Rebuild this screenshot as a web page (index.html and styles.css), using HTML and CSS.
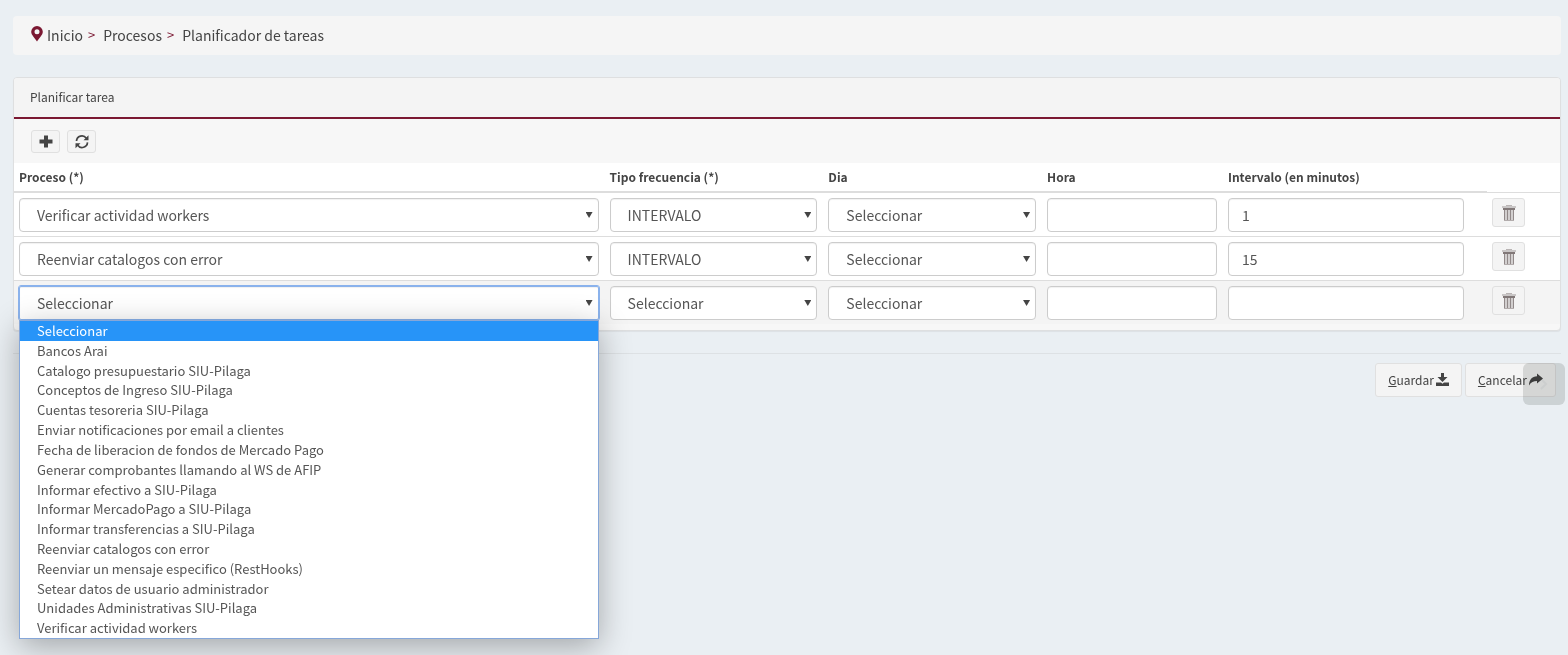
FILE: index.html
```html
<!DOCTYPE html>
<html lang="es">
<head>
<meta charset="utf-8">
<title>Planificador de tareas</title>
<link rel="stylesheet" href="styles.css">
</head>
<body>
<svg class="sprite" aria-hidden="true">
  <symbol id="trash" viewBox="0 0 14 18">
    <path fill="#b9b4b4" d="M4 1h6v2H4z"/>
    <path fill="#c9c6c6" d="M0 2h14v2H0z"/>
    <path fill="#817878" d="M1 4h12v2H1z"/>
    <path fill="#d2cfcf" d="M2 6h10v11H2z"/>
    <path fill="#918989" d="M2 6h1v11H2zM5 6h1v10H5zM8 6h1v10H8zM11 6h1v11h-1z"/>
    <path fill="#b3adad" d="M2 16h10v1H2z"/>
  </symbol>
</svg>
<nav class="breadcrumb" aria-label="Ruta">
  <svg class="pin" viewBox="0 0 12 16" aria-hidden="true"><path fill="#7b1832" fill-rule="evenodd" d="M6 0a5.800 5.800 0 0 0-5.800 5.800C.2 9 3.800 12 6 15.500 8.200 12 11.800 9 11.800 5.800A5.800 5.800 0 0 0 6 0zM6 3.200a2.500 2.500 0 1 1 0 5 2.500 2.500 0 0 1 0-5z"/></svg>
  <a href="#">Inicio</a><span class="sep">&gt;</span><a href="#">Procesos</a><span class="sep">&gt;</span><a href="#">Planificador de tareas</a>
</nav>

<form class="form">
  <section class="panel">
    <h1 class="panel-title">Planificar tarea</h1>
    <div class="toolbar">
      <button type="button" class="btn tool" aria-label="Agregar"><svg width="14" height="14" viewBox="0 0 14 14"><path fill="#444" d="M5 .500h4v4h4.500v4H9v4H5v-4H.500v-4H5z"/></svg></button>
      <button type="button" class="btn tool" aria-label="Actualizar"><svg width="14" height="14" viewBox="0 0 14 14"><path fill="none" stroke="#444" stroke-width="1.700" d="M1.500 6A5.400 5.400 0 0 1 11.300 3.200M12.500 7.400A5.400 5.400 0 0 1 2.700 10.200"/><path fill="#444" d="M13.500.200v5H8.500zM.500 13.200v-5h5z"/></svg></button>
    </div>
    <table class="grid">
      <colgroup><col class="c-process"><col class="c-type"><col class="c-day"><col class="c-hour"><col class="c-interval"><col></colgroup>
      <thead>
        <tr><th id="h1">Proceso (*)</th><th id="h2">Tipo frecuencia (*)</th><th id="h3">Dia</th><th id="h4">Hora</th><th id="h5">Intervalo (en minutos)</th><td class="blank"></td></tr>
      </thead>
      <tbody>
        <tr>
          <td><div class="pick"><select class="field" aria-labelledby="h1"><option>Verificar actividad workers</option></select></div></td>
          <td><div class="pick"><select class="field" aria-labelledby="h2"><option>INTERVALO</option></select></div></td>
          <td><div class="pick"><select class="field" aria-labelledby="h3"><option>Seleccionar</option></select></div></td>
          <td><input class="field" type="text" aria-labelledby="h4"></td>
          <td><input class="field interval" type="text" value="1" aria-labelledby="h5"></td>
          <td><button type="button" class="btn delete" aria-label="Eliminar"><svg width="14" height="18"><use href="#trash"/></svg></button></td>
        </tr>
        <tr>
          <td><div class="pick"><select class="field" aria-labelledby="h1"><option>Reenviar catalogos con error</option></select></div></td>
          <td><div class="pick"><select class="field" aria-labelledby="h2"><option>INTERVALO</option></select></div></td>
          <td><div class="pick"><select class="field" aria-labelledby="h3"><option>Seleccionar</option></select></div></td>
          <td><input class="field" type="text" aria-labelledby="h4"></td>
          <td><input class="field interval" type="text" value="15" aria-labelledby="h5"></td>
          <td><button type="button" class="btn delete" aria-label="Eliminar"><svg width="14" height="18"><use href="#trash"/></svg></button></td>
        </tr>
        <tr class="current">
          <td><div class="pick open"><select class="field" aria-labelledby="h1"><option>Seleccionar</option></select>
            <ul class="options" role="listbox" aria-labelledby="h1">
              <li role="option" aria-selected="true" class="active">Seleccionar</li>
              <li role="option">Bancos Arai</li>
              <li role="option">Catalogo presupuestario SIU-Pilaga</li>
              <li role="option">Conceptos de Ingreso SIU-Pilaga</li>
              <li role="option">Cuentas tesoreria SIU-Pilaga</li>
              <li role="option">Enviar notificaciones por email a clientes</li>
              <li role="option">Fecha de liberacion de fondos de Mercado Pago</li>
              <li role="option">Generar comprobantes llamando al WS de AFIP</li>
              <li role="option">Informar efectivo a SIU-Pilaga</li>
              <li role="option">Informar MercadoPago a SIU-Pilaga</li>
              <li role="option">Informar transferencias a SIU-Pilaga</li>
              <li role="option">Reenviar catalogos con error</li>
              <li role="option">Reenviar un mensaje especifico (RestHooks)</li>
              <li role="option">Setear datos de usuario administrador</li>
              <li role="option">Unidades Administrativas SIU-Pilaga</li>
              <li role="option">Verificar actividad workers</li>
            </ul></div></td>
          <td><div class="pick"><select class="field" aria-labelledby="h2"><option>Seleccionar</option></select></div></td>
          <td><div class="pick"><select class="field" aria-labelledby="h3"><option>Seleccionar</option></select></div></td>
          <td><input class="field" type="text" aria-labelledby="h4"></td>
          <td><input class="field interval" type="text" aria-labelledby="h5"></td>
          <td><button type="button" class="btn delete" aria-label="Eliminar"><svg width="14" height="18"><use href="#trash"/></svg></button></td>
        </tr>
      </tbody>
    </table>
  </section>

  <div class="actions">
    <button type="button" class="btn action"><span><u>G</u>uardar</span><svg width="13" height="14" viewBox="0 0 13 14"><path fill="#444" d="M5 0h3v4h3.500l-5 5-5-5H5zM0 9.500h5l1.500 1.200L8 9.500h5V13H0z"/></svg></button>
    <button type="button" class="btn action"><span><u>C</u>ancelar</span><svg width="14" height="14" viewBox="0 0 14 14"><path fill="#444" d="M8 .500L14 5.500l-6 5V8C4.500 8 2 9 0 12.500 0 7 3 3.300 8 3.200z"/></svg></button>
    <button type="button" class="handle" aria-label="Mostrar panel"><svg width="8" height="12" viewBox="0 0 8 12"><path fill="none" stroke="#d6d8d8" stroke-width="2" d="M1 1l5 5-5 5"/></svg></button>
  </div>
</form>
</body>
</html>
```
FILE: styles.css
```css
* { box-sizing: border-box; }

body {
  min-height: 100vh;
  margin: 0;
  padding: 16px 7px 16px 13px;
  background: #eaeff3;
  color: #444;
  font: 14px/20px "Noto Sans CJK SC", sans-serif;
}

.sprite { position: absolute; width: 0; height: 0; }

.breadcrumb {
  display: flex;
  align-items: center;
  height: 39px;
  margin-bottom: 22px;
  padding: 0 18px 2px;
  border-radius: 4px;
  background: #f5f5f5;
}
.breadcrumb a { color: #444; text-decoration: none; }
.pin { width: 12px; height: 16px; margin: 0 4px 2px 0; }
.sep { margin: 0 8px 0 5px; color: #7b1832; font-size: 13px; }

.panel {
  border: 1px solid #dedfe0;
  border-radius: 4px;
  background: #f7f7f7;
  padding-bottom: 6px;
  box-shadow: 0 1px 1px rgba(0, 0, 0, .06);
}
.panel-title {
  margin: 0;
  padding: 9px 16px 10px;
  border-bottom: 2px solid #7b1832;
  border-radius: 3px 3px 0 0;
  background: #f4f4f4;
  font-size: 12px;
  font-weight: 400;
  line-height: 20px;
}
.toolbar { display: flex; gap: 7px; padding: 11px 17px 10px; }

.btn {
  display: inline-flex;
  align-items: center;
  justify-content: center;
  border: 1px solid #e0e0e0;
  border-radius: 3px;
  background: #f4f4f4;
  color: #444;
  font: inherit;
  font-size: 12px;
}
.tool { width: 29px; height: 23px; padding: 0; }
.delete { width: 33px; height: 29px; padding: 0; display: flex; }

.grid {
  width: 100%;
  table-layout: fixed;
  border-collapse: separate;
  border-spacing: 0;
  background: #fff;
}
.c-process { width: 38.2%; }
.c-type, .c-day { width: 14.15%; }
.c-hour { width: 11.7%; }
.c-interval { width: 17.1%; }
.grid th {
  padding: 4px 5px;
  border-bottom: 1px solid #ddd;
  text-align: left;
  font-size: 12px;
  font-weight: 700;
  line-height: 20px;
}
.grid .blank { padding: 0; }
.grid tbody td {
  padding: 5px 6px 4px 5px;
  border-top: 1px solid #ddd;
  vertical-align: top;
}
.current td { background: #f4f4f4; }

.field {
  display: block;
  width: 100%;
  height: 34px;
  padding: 0 13px;
  border: 1px solid #ccc;
  border-radius: 4px;
  background: #fff;
  box-shadow: inset 0 1px 1px rgba(0, 0, 0, .06);
  color: #555;
  font: inherit;
  appearance: none;
}
.interval { width: 93%; }
.pick { position: relative; }
.pick .field { padding: 0 17px; }
.pick::after {
  content: "";
  position: absolute;
  top: 14px;
  right: 6px;
  width: 7px;
  height: 6px;
  background: #444;
  clip-path: polygon(0 0, 100% 0, 50% 100%);
  pointer-events: none;
}
.open .field { border-color: #8ab2ec; border-radius: 2px; outline: 1px solid #8ab2ec; }

.options {
  position: absolute;
  z-index: 2;
  top: 100%;
  left: 0;
  right: 0;
  display: grid;
  grid-auto-rows: 1fr;
  height: 319px;
  margin: 0;
  padding: 0;
  border: 1px solid #86a7d9;
  background: #fff;
  box-shadow: 0 8px 30px rgba(0, 0, 0, .3);
  color: #555;
  font-size: 13px;
  line-height: 19px;
  list-style: none;
}
.options li { padding: 0 17px; }
.options .active { background: #2794f8; color: #fff; }

.actions {
  position: relative;
  display: flex;
  justify-content: flex-end;
  gap: 3px;
  margin-top: 22px;
  padding: 9px 5px 0 0;
  border-top: 1px solid #dde1e4;
}
.action { gap: 2px; height: 34px; padding: 0 12px; }
.handle {
  position: absolute;
  top: 9px;
  right: -4px;
  display: flex;
  align-items: center;
  justify-content: center;
  width: 42px;
  height: 42px;
  border: 0;
  border-radius: 6px;
  background: #dfe0df;
  mix-blend-mode: multiply;
}
```
